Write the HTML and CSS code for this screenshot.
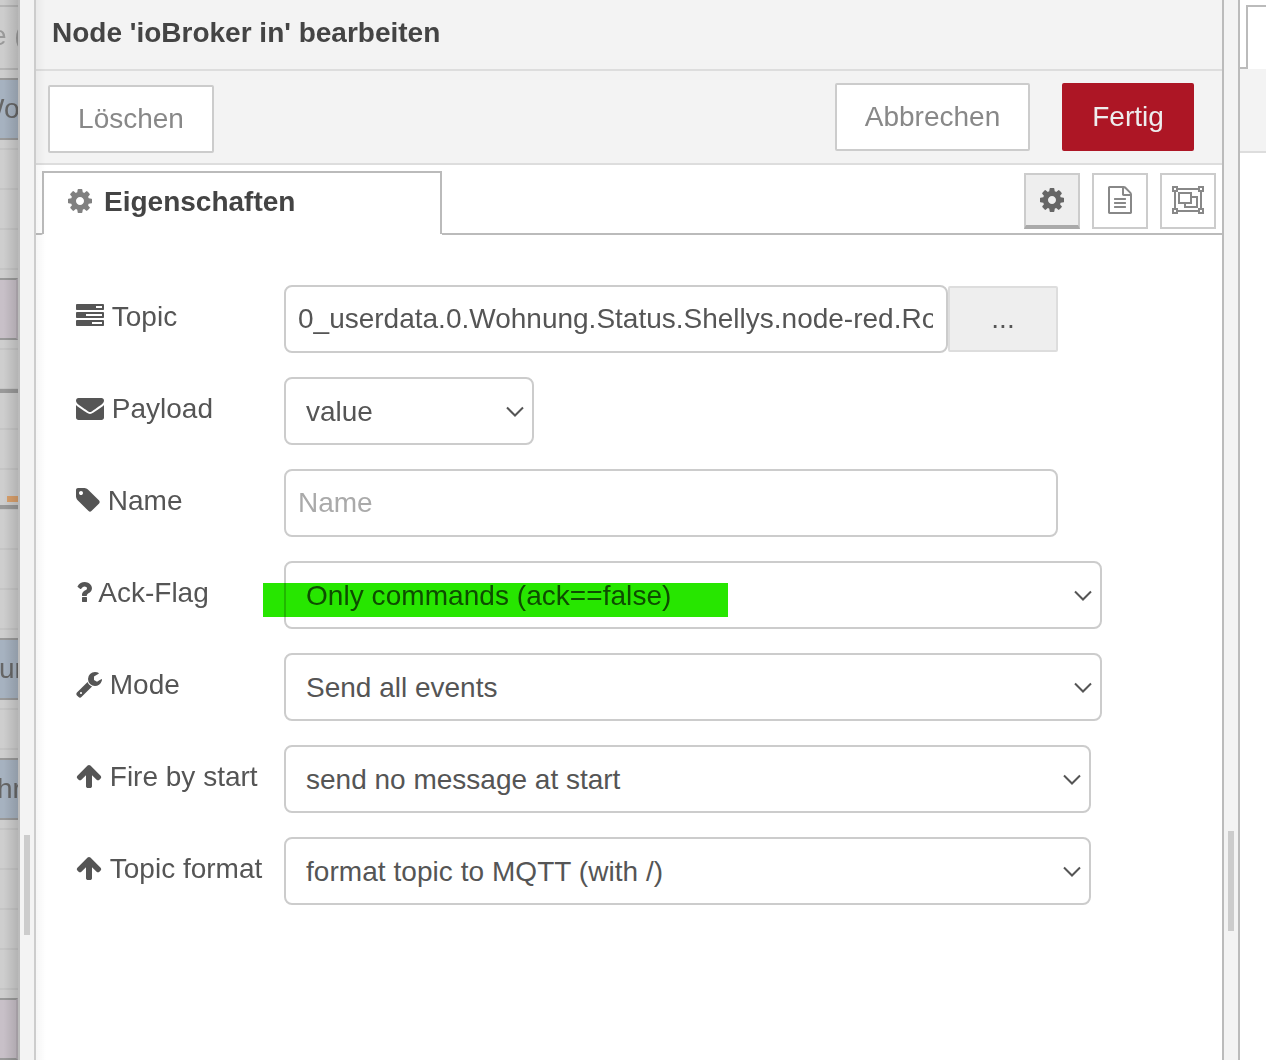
FILE: index.html
```html
<!DOCTYPE html>
<html lang="de">
<head>
<meta charset="utf-8">
<title>Node bearbeiten</title>
<link rel="stylesheet" href="styles.css">
</head>
<body>
<svg class="defs" width="0" height="0">
  <symbol id="cog" viewBox="0 0 1792 1792"><path d="M1152 896q0-106-75-181t-181-75-181 75-75 181 75 181 181 75 181-75 75-181zm512-109v222q0 12-8 23t-20 13l-185 28q-19 54-39 91 35 50 107 138 10 12 10 25t-9 23q-27 37-99 108t-94 71q-12 0-26-9l-138-108q-44 23-91 38-16 136-29 186-7 28-36 28h-222q-14 0-24.500-8.500t-11.500-21.500l-28-184q-49-16-90-37l-141 107q-10 9-25 9-14 0-25-11-126-114-165-168-7-10-7-23 0-12 8-23 15-21 51-66.500t54-70.500q-27-50-41-99l-183-27q-13-2-21-12.500t-8-23.500v-222q0-12 8-23t19-13l186-28q14-46 39-92-40-57-107-138-10-12-10-24 0-10 9-23 26-36 98.500-107.500t94.500-71.500q13 0 26 10l138 107q44-23 91-38 16-136 29-186 7-28 36-28h222q14 0 24.500 8.500t11.500 21.500l28 184q49 16 90 37l142-107q9-9 24-9 13 0 25 10 129 119 165 170 7 8 7 22 0 12-8 23-15 21-51 66.500t-54 70.500q26 50 41 98l183 28q13 2 21 12.500t8 23.500z"/></symbol>
  <symbol id="arrow" viewBox="0 0 1792 1792"><path d="M1675 971q0 51-37 90l-75 75q-38 38-91 38-54 0-90-38l-294-293v704q0 52-37.500 84.500t-90.500 32.500h-128q-53 0-90.500-32.500t-37.500-84.500v-704l-294 293q-36 38-90 38t-90-38l-75-75q-38-38-38-90 0-53 38-91l651-651q35-37 90-37 54 0 91 37l651 651q37 39 37 91z"/></symbol>
  <symbol id="chevron" viewBox="0 0 18 11"><path d="M1 1.500L9 9.500L17 1.500" fill="none" stroke="#555" stroke-width="2"/></symbol>
</svg>
<div class="app">
  <aside class="canvas">
    <div class="canvas-tabs"><span>e (</span></div>
    <div class="node blue n1"><span class="t1">Wo</span></div>
    <div class="node mauve n2"></div>
    <div class="wire w1"></div>
    <div class="status"></div>
    <div class="wire w2"></div>
    <div class="node blue n3"><span class="t3">ur</span></div>
    <div class="node blue n4"><span class="t4">hr</span></div>
    <div class="node mauve n5"></div>
    <div class="shade"></div>
  </aside>
  <div class="splitter left"><i></i></div>
  <main class="panel">
    <header class="title">Node 'ioBroker in' bearbeiten</header>
    <div class="toolbar">
      <button class="btn delete">Löschen</button>
      <button class="btn cancel">Abbrechen</button>
      <button class="btn primary">Fertig</button>
    </div>
    <div class="tabs">
      <div class="foot start"></div>
      <div class="tab"><svg class="icon"><use href="#cog"/></svg><span>Eigenschaften</span></div>
      <div class="foot end">
        <button class="tool active"><svg class="icon"><use href="#cog"/></svg></button>
        <button class="tool"><svg class="icon" viewBox="0 0 1792 1792"><path d="M1596 380q28 28 48 76t20 88v1152q0 40-28 68t-68 28h-1344q-40 0-68-28t-28-68v-1600q0-40 28-68t68-28h896q40 0 88 20t76 48zm-444-244v376h376q-10-29-22-41l-313-313q-12-12-41-22zm384 1528v-1024h-416q-40 0-68-28t-28-68v-416h-768v1536h1280zm-1024-864q0-14 9-23t23-9h704q14 0 23 9t9 23v64q0 14-9 23t-23 9h-704q-14 0-23-9t-9-23v-64zm736 224q14 0 23 9t9 23v64q0 14-9 23t-23 9h-704q-14 0-23-9t-9-23v-64q0-14 9-23t23-9h704zm0 256q14 0 23 9t9 23v64q0 14-9 23t-23 9h-704q-14 0-23-9t-9-23v-64q0-14 9-23t23-9h704z"/></svg></button>
        <button class="tool"><svg class="group" viewBox="0 0 32 28" fill="none" stroke="#888" stroke-width="2"><path d="M6 3H26M6 25H26M3 6V22M29 6V22M1 1H5V5H1ZM27 1H31V5H27ZM1 23H5V27H1ZM27 23H31V27H27ZM7 7H19V17H7ZM19 11H25V21H13V17"/></svg></button>
      </div>
    </div>
    <form class="form">
      <div class="row">
        <label><svg class="icon" viewBox="0 0 1792 1792"><path d="M1024 1408h640v-128h-640v128zm-384-512h1024v-128h-1024v128zm640-512h384v-128h-384v128zm512 832v256q0 26-19 45t-45 19h-1664q-26 0-45-19t-19-45v-256q0-26 19-45t45-19h1664q26 0 45 19t19 45zm0-512v256q0 26-19 45t-45 19h-1664q-26 0-45-19t-19-45v-256q0-26 19-45t45-19h1664q26 0 45 19t19 45zm0-512v256q0 26-19 45t-45 19h-1664q-26 0-45-19t-19-45v-256q0-26 19-45t45-19h1664q26 0 45 19t19 45z"/></svg><span>Topic</span></label>
        <div class="field topic"><span>0_userdata.0.Wohnung.Status.Shellys.node-red.Ro</span></div>
        <button type="button" class="more">...</button>
      </div>
      <div class="row">
        <label><svg class="icon" viewBox="0 0 1792 1792"><path d="M1792 710v794q0 66-47 113t-113 47h-1472q-66 0-113-47t-47-113v-794q44 49 101 87 362 246 497 345 57 42 92.500 65.500t94.500 48 110 24.500h2q51 0 110-24.500t94.500-48 92.500-65.500q170-123 498-345 57-39 100-87zm0-294q0 79-49 151t-122 123q-376 261-468 325-10 7-42.500 31t-54 38.500-52 32.500-57.500 27-50 9h-2q-23 0-50-9t-57.500-27-52-32.500-54-38.500-42.500-31q-91-64-262-182.500t-205-142.500q-62-42-117-115.500t-55-136.500q0-78 41.500-130t118.500-52h1472q65 0 112.500 47t47.500 113z"/></svg><span>Payload</span></label>
        <div class="select short"><span>value</span><svg class="chevron"><use href="#chevron"/></svg></div>
      </div>
      <div class="row">
        <label><svg class="icon w24" viewBox="0 0 1792 1792"><path d="M576 448q0-53-37.500-90.500t-90.500-37.500-90.500 37.500-37.500 90.500 37.500 90.500 90.500 37.500 90.500-37.500 37.500-90.500zm1067 576q0 53-37 90l-491 492q-39 37-91 37-53 0-90-37l-715-716q-38-37-64.500-101t-26.500-117v-416q0-52 38-90t90-38h416q53 0 117 26.500t102 64.500l715 714q37 39 37 91z"/></svg><span>Name</span></label>
        <div class="field name"><span>Name</span></div>
      </div>
      <div class="row">
        <label><svg class="icon w15" viewBox="0 0 1792 1792"><path d="M1088 1256v240q0 16-12 28t-28 12h-240q-16 0-28-12t-12-28v-240q0-16 12-28t28-12h240q16 0 28 12t12 28zm316-600q0 54-15.500 101t-35 76.500-55 59.500-57.500 43.500-61 35.500q-41 23-68.500 65t-27.500 67q0 17-12 32.500t-28 15.500h-240q-15 0-25.500-18.500t-10.500-37.500v-45q0-83 65-156.500t143-108.500q59-27 84-56t25-76q0-42-46.500-74t-107.500-32q-65 0-108 29-35 25-107 115-13 16-31 16-12 0-25-8l-164-125q-13-10-15.500-25t5.500-28q160-266 464-266 80 0 161 31t146 83 106 127.500 41 158.500z"/></svg><span>Ack-Flag</span></label>
        <div class="select wide ack"><span>Only commands (ack==false)</span><svg class="chevron"><use href="#chevron"/></svg><i class="marker"></i></div>
      </div>
      <div class="row">
        <label><svg class="icon w26" viewBox="0 0 1792 1792"><path d="M448 1472q0-26-19-45t-45-19-45 19-19 45 19 45 45 19 45-19 19-45zm644-420l-682 682q-37 37-90 37-52 0-91-37l-106-108q-38-36-38-90 0-53 38-91l681-681q39 98 114.500 173.500t173.500 114.500zm634-435q0 39-23 106-47 134-164.500 217.500t-258.500 83.500q-185 0-316.500-131.500t-131.500-316.500 131.500-316.500 316.500-131.500q58 0 121.500 16.500t107.500 46.500q16 11 16 28t-16 28l-293 169v224l193 107q5-3 79-48.500t135.500-81 70.500-35.500q15 0 23.500 10t8.500 25z"/></svg><span>Mode</span></label>
        <div class="select wide"><span>Send all events</span><svg class="chevron"><use href="#chevron"/></svg></div>
      </div>
      <div class="row">
        <label><svg class="icon w26"><use href="#arrow"/></svg><span>Fire by start</span></label>
        <div class="select"><span>send no message at start</span><svg class="chevron"><use href="#chevron"/></svg></div>
      </div>
      <div class="row">
        <label><svg class="icon w26"><use href="#arrow"/></svg><span>Topic format</span></label>
        <div class="select mqtt"><span>format topic to MQTT (with /)</span><svg class="chevron"><use href="#chevron"/></svg></div>
      </div>
    </form>
  </main>
  <div class="splitter right"><i></i></div>
  <aside class="sidebar"><div class="side-tabs"><b></b></div><div class="side-tools"></div></aside>
</div>
</body>
</html>
```
FILE: styles.css
```css
* { box-sizing: border-box; }
body { margin: 0; background: #fff; color: #555; font: 28px/40px "Liberation Sans", Arial, sans-serif; }
button { font: inherit; padding: 0; margin: 0; }
.defs { display: block; position: absolute; }
.app { display: flex; height: 1060px; overflow: hidden; }

/* dimmed flow canvas */
.canvas { position: relative; flex: 0 0 18px; overflow: hidden; background: repeating-linear-gradient(#c5c5c5 0 2px, #cecece 2px 40px) 0 -12px / 100% 1080px; }
.canvas-tabs { height: 70px; background: #cdcdcd; border-bottom: 2px solid #b5b5b5; color: #999; overflow: hidden; }
.canvas-tabs::before { content: ""; display: block; margin-top: 5px; height: 2px; background: #b5b5b5; }
.canvas-tabs span { display: block; margin: 9px 0 0 -9px; white-space: nowrap; }
.node { position: absolute; left: -20px; width: 60px; height: 62px; border: 2px solid #999; }
.node span { position: absolute; top: 9px; color: #666; }
.blue { background: #a6b2c0; }
.mauve { background: #c8c0c8; width: 38px; border-right-color: #b9b2b9; }
.n1 { top: 78px; } .n2 { top: 278px; } .n3 { top: 638px; } .n4 { top: 758px; } .n5 { top: 998px; }
.t1 { left: -4px; } .t3 { left: 17px; } .t4 { left: 15px; }
.wire { position: absolute; left: 0; width: 18px; height: 4px; background: #999; }
.w1 { top: 389px; } .w2 { top: 505px; }
.status { position: absolute; left: 7px; top: 496px; width: 11px; height: 6px; background: #d9a06c; }
.shade { position: absolute; inset: 0; background: linear-gradient(90deg, transparent 20%, rgba(0,0,0,.13)); }

.splitter { flex: none; width: 18px; background: #f3f3f3; border-left: 2px solid #bbb; border-right: 2px solid #bbb; }
.splitter.left { border-right-color: #ccc; }
.splitter i { display: block; width: 6px; height: 100px; margin: 835px 0 0 4px; background: #ccc; }
.splitter.right i { margin-top: 831px; }

.panel { position: relative; flex: 0 0 1186px; }
.panel::after { content: ""; position: absolute; left: 0; top: 0; bottom: 0; width: 10px; background: linear-gradient(90deg, rgba(0,0,0,.04), transparent); }
.title { height: 71px; padding: 13px 16px 0; background: #f3f3f3; border-bottom: 2px solid #ddd; color: #444; font-weight: bold; }
.toolbar { display: flex; height: 94px; padding: 12px 28px 0 12px; background: #f3f3f3; border-bottom: 2px solid #ddd; }
.btn { height: 68px; border: 2px solid #ccc; border-radius: 2px; background: #fff; color: #888; }
.delete { width: 166px; margin-top: 2px; }
.cancel { width: 195px; margin-left: auto; }
.primary { width: 132px; margin-left: 32px; background: #ad1625; border-color: #ad1625; color: #eee; }

.tabs { display: flex; height: 70px; padding-top: 6px; }
.foot { border-bottom: 2px solid #bbb; height: 64px; }
.start { width: 7px; margin-right: -1px; border-bottom-right-radius: 2px; }
.end { flex: 1; display: flex; justify-content: flex-end; gap: 12px; padding: 2px 6px 0 0; }
.tab { display: flex; width: 400px; height: 63px; padding: 9px 22px; border: 2px solid #bbb; border-bottom: 0; color: #444; font-weight: bold; }
.tab .icon { margin: 5px 10px 0 0; fill: #808080; }
.tool { display: flex; width: 56px; height: 56px; align-items: center; justify-content: center; border: 2px solid #ccc; background: #fff; }
.tool .icon { fill: #888; margin-bottom: 2px; }
.active { background: #eee; border-bottom: 4px solid #aaa; }
.tool.active .icon { fill: #666; margin-bottom: 0; }
.icon { display: block; flex: none; width: 28px; height: 28px; fill: #555; }
.group { width: 32px; height: 28px; margin-top: -2px; }

.form { display: flex; flex-direction: column; gap: 24px; padding: 50px 0 0 40px; }
.row { display: flex; height: 68px; }
label { display: flex; flex: 0 0 208px; gap: 7.8px; padding-top: 12px; white-space: nowrap; }
label .icon { margin-top: 5px; }
.w24 { margin-left: -2px; margin-right: -2px; }
.w15 { margin-left: -6px; margin-right: -7.5px; }
.w26 { margin-left: -1px; margin-right: -1px; }
.field, .select { display: flex; height: 68px; border: 2px solid #ccc; border-radius: 8px; background: #fff; white-space: nowrap; }
.field { padding: 12px 12px 0 12px; }
.field span { overflow: hidden; }
.topic { width: 664px; padding-right: 13px; }
.name { width: 774px; color: #aaa; }
.select { position: relative; width: 807px; padding: 13px 8px 0 20px; justify-content: space-between; }
.ack, .mqtt { letter-spacing: .05px; }
.short { width: 250px; }
.wide { width: 818px; }
.chevron { width: 18px; height: 11px; margin-top: 14px; }
.more { width: 110px; height: 66px; margin-top: 1px; border: 2px solid #ddd; border-radius: 2px; background: #eee; color: #555; }
.marker { position: absolute; left: -23px; top: 20px; width: 465px; height: 34px; background: #27e600; mix-blend-mode: multiply; }

.sidebar { flex: 1; }
.side-tabs { display: flex; height: 69px; padding: 5px 0 0; }
.side-tabs::before { content: ""; width: 7px; border-bottom: 2px solid #bbb; }
.side-tabs b { flex: 1; border-top: 2px solid #bbb; border-left: 2px solid #bbb; margin-left: -1px; }
.side-tools { height: 84px; background: #f3f3f3; border-bottom: 2px solid #ddd; }
```
